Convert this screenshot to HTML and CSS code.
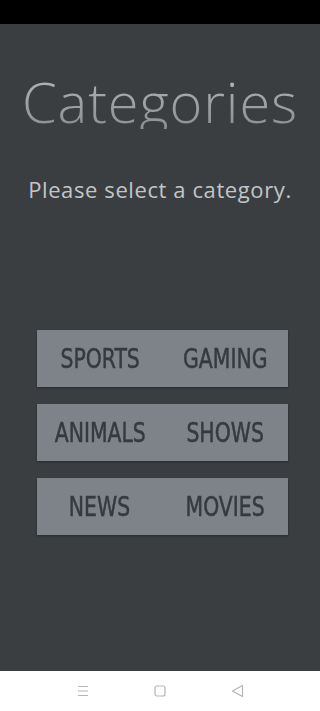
FILE: index.html
```html
<!DOCTYPE html>
<html lang="en">
<head>
    <meta charset="UTF-8">
    <meta name="viewport" content="width=device-width, initial-scale=1.0">
    <title>Categories</title>
    <link rel="stylesheet" href="styles.css">
</head>
<body>
    <div class="status-bar"></div>
    <main class="screen">
        <h1 class="title">Categories</h1>
        <p class="subtitle">Please select a category.</p>
        <div class="category-list">
            <div class="category-row">
                <button class="category"><span>SPORTS</span></button>
                <button class="category"><span>GAMING</span></button>
            </div>
            <div class="category-row">
                <button class="category"><span>ANIMALS</span></button>
                <button class="category"><span>SHOWS</span></button>
            </div>
            <div class="category-row">
                <button class="category"><span>NEWS</span></button>
                <button class="category"><span>MOVIES</span></button>
            </div>
        </div>
    </main>
    <nav class="nav-bar">
        <svg class="nav-icon" width="12" height="12" viewBox="0 0 12 12">
            <path d="M1 1.5h10M1 6h10M1 10.5h10" stroke="#b5b5b5" stroke-width="1.2" fill="none"/>
        </svg>
        <svg class="nav-icon" width="12" height="12" viewBox="0 0 12 12">
            <rect x="1" y="1" width="10" height="10" rx="2" stroke="#b5b5b5" stroke-width="1.2" fill="none"/>
        </svg>
        <svg class="nav-icon" width="13" height="14" viewBox="0 0 13 14">
            <path d="M11.5 1.5L1.5 7l10 5.5z" stroke="#b5b5b5" stroke-width="1.2" stroke-linejoin="round" fill="none"/>
        </svg>
    </nav>
</body>
</html>
```

FILE: styles.css
```css
body {
    margin: 0;
    height: 711px;
    display: flex;
    flex-direction: column;
    font-family: 'Open Sans', 'DejaVu Sans', sans-serif;
    overflow: hidden;
}

.status-bar {
    height: 24px;
    background: #000;
}

.screen {
    flex: 1;
    background: #3b3e41;
    display: flex;
    flex-direction: column;
    align-items: center;
}

.title {
    margin: 49px 0 0;
    font-size: 56px;
    line-height: 1;
    font-weight: 300;
    letter-spacing: 0.9px;
    background: linear-gradient(#b4b6b8, #8c8e91);
    -webkit-background-clip: text;
    background-clip: text;
    color: transparent;
}

.subtitle {
    margin: 49px 0 0;
    font-size: 22px;
    line-height: 1;
    letter-spacing: 0.6px;
    color: #c3c5c7;
}

.category-list {
    width: 251px;
    margin: 130px 0 0 5px;
    display: flex;
    flex-direction: column;
    gap: 17px;
}

.category-row {
    height: 57px;
    display: grid;
    grid-template-columns: 1fr 1fr;
    background: #7e8389;
    box-shadow: 0 1px 2px rgba(0, 0, 0, 0.35);
}

.category {
    border: none;
    background: none;
    padding: 0;
    display: flex;
    justify-content: center;
    align-items: center;
    font-family: 'DejaVu Sans', sans-serif;
    font-stretch: condensed;
    font-size: 27px;
    color: #363a40;
    -webkit-text-stroke: 0.5px #363a40;
    cursor: pointer;
}

.category span {
    display: inline-block;
    transform: scaleX(0.84);
}

.nav-bar {
    height: 40px;
    background: #fff;
    display: flex;
    justify-content: center;
    align-items: center;
    gap: 65px;
}
```
